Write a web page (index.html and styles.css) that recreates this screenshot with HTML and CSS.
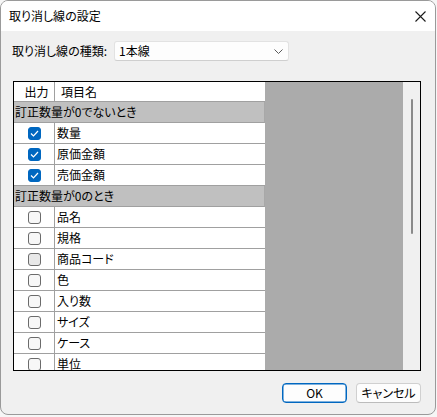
FILE: index.html
```html
<!DOCTYPE html>
<html lang="ja">
<head>
<meta charset="utf-8">
<link rel="stylesheet" href="styles.css">
</head>
<body>
<div class="window">
  <div class="titlebar">
    <span class="title">取り消し線の設定</span>
    <svg class="close" width="11" height="11" viewBox="0 0 11 11"><path d="M0.5 0.5 L10.5 10.5 M10.5 0.5 L0.5 10.5" stroke="#1a1a1a" stroke-width="1.1" fill="none"/></svg>
  </div>
  <div class="content">
    <div class="field">
      <span class="label">取り消し線の種類:</span>
      <div class="combo">
        <span>1本線</span>
        <svg class="chev" width="9" height="5" viewBox="0 0 9 5"><path d="M0.5 0.5 L4.5 4.5 L8.5 0.5" stroke="#5a5a5a" stroke-width="1" fill="none"/></svg>
      </div>
    </div>
    <div class="table">
      <div class="cells">
        <div class="row head"><div class="c1 hc1">出力</div><div class="c2 hc2">項目名</div></div>
        <div class="group">訂正数量が0でないとき</div>
        <div class="row"><div class="c1"><span class="cb on"><svg width="9" height="7" viewBox="0 0 9 7"><path d="M1 3.5 L3.5 6 L8 1" stroke="#fff" stroke-width="1.2" fill="none"/></svg></span></div><div class="c2">数量</div></div>
        <div class="row"><div class="c1"><span class="cb on"><svg width="9" height="7" viewBox="0 0 9 7"><path d="M1 3.5 L3.5 6 L8 1" stroke="#fff" stroke-width="1.2" fill="none"/></svg></span></div><div class="c2">原価金額</div></div>
        <div class="row"><div class="c1"><span class="cb on"><svg width="9" height="7" viewBox="0 0 9 7"><path d="M1 3.5 L3.5 6 L8 1" stroke="#fff" stroke-width="1.2" fill="none"/></svg></span></div><div class="c2">売価金額</div></div>
        <div class="group">訂正数量が0のとき</div>
        <div class="row"><div class="c1"><span class="cb"></span></div><div class="c2">品名</div></div>
        <div class="row"><div class="c1"><span class="cb"></span></div><div class="c2">規格</div></div>
        <div class="row"><div class="c1"><span class="cb hover"></span></div><div class="c2">商品コード</div></div>
        <div class="row"><div class="c1"><span class="cb"></span></div><div class="c2">色</div></div>
        <div class="row"><div class="c1"><span class="cb"></span></div><div class="c2">入り数</div></div>
        <div class="row"><div class="c1"><span class="cb"></span></div><div class="c2">サイズ</div></div>
        <div class="row"><div class="c1"><span class="cb"></span></div><div class="c2">ケース</div></div>
        <div class="row"><div class="c1"><span class="cb"></span></div><div class="c2">単位</div></div>
      </div>
      <div class="empty"></div>
      <div class="scroll"><div class="thumb"></div></div>
    </div>
    <div class="buttons">
      <button class="btn primary">OK</button>
      <button class="btn">キャンセル</button>
    </div>
  </div>
</div>
</body>
</html>
```
FILE: styles.css
```css
html, body {
  margin: 0;
  padding: 0;
  background: #f6f6f6;
}
body {
  font-family: "Noto Sans CJK JP", "Noto Sans", sans-serif;
  font-size: 12px;
  color: #000;
  font-feature-settings: "palt";
}
.window {
  box-sizing: border-box;
  width: 436px;
  height: 415px;
  border: 1px solid #9a9a9a;
  border-radius: 8px;
  background: #f0f0f0;
  overflow: hidden;
  display: flex;
  flex-direction: column;
}
.titlebar {
  height: 30px;
  background: #fff;
  display: flex;
  align-items: center;
  justify-content: space-between;
  padding: 0 9px 0 8px;
  flex: none;
}
.title {
  font-size: 12px;
  line-height: 14px;
}
.close {
  display: block;
  margin-top: 0;
}
.content {
  padding: 10px 14px 0 11px;
  display: flex;
  flex-direction: column;
}
.field {
  display: flex;
  align-items: center;
  height: 20px;
}
.label {
  width: 102px;
  flex: none;
  line-height: 16px;
}
.combo {
  box-sizing: border-box;
  width: 175px;
  height: 20px;
  background: #fdfdfd;
  border: 1px solid #e2e2e2;
  border-bottom-color: #cfcfcf;
  border-radius: 3px;
  display: flex;
  align-items: center;
  justify-content: space-between;
  padding: 0 5px 0 4px;
  line-height: 16px;
}
.chev {
  display: block;
}
.table {
  box-sizing: border-box;
  margin: 20px 0 0 1px;
  width: 408px;
  height: 290px;
  border: 1px solid #000;
  display: flex;
  overflow: hidden;
}
.cells {
  width: 251px;
  flex: none;
  display: flex;
  flex-direction: column;
  overflow: hidden;
  background: #fff;
}
.row {
  box-sizing: border-box;
  height: 21px;
  flex: none;
  display: flex;
  border-bottom: 1px solid #a0a0a0;
  background: #fff;
}
.row.head {
  height: 20px;
}
.c1 {
  width: 40px;
  flex: none;
  display: flex;
  align-items: center;
  justify-content: center;
}
.c2 {
  box-sizing: border-box;
  width: 211px;
  border-left: 1px solid #a0a0a0;
  padding-left: 2px;
  line-height: 20px;
  white-space: nowrap;
}
.hc1 {
  padding-left: 5px;
  box-sizing: border-box;
  line-height: 19px;
}
.hc2 {
  padding-left: 6px;
  line-height: 19px;
}
.group {
  box-sizing: border-box;
  height: 21px;
  flex: none;
  background: #c0c0c0;
  border-bottom: 1px solid #a0a0a0;
  border-right: 1px solid #a8a8a8;
  padding-left: 1px;
  line-height: 20px;
  white-space: nowrap;
}
.cb {
  box-sizing: border-box;
  width: 13px;
  height: 13px;
  border: 1px solid #6b6b6b;
  border-radius: 3px;
  background: #f7f7f7;
  display: flex;
  align-items: center;
  justify-content: center;
  margin-left: 1px;
}
.cb.hover {
  background: #e8e8e8;
}
.cb.on {
  background: #0067c0;
  border-color: #0067c0;
}
.cb svg {
  display: block;
}
.empty {
  flex: 1;
  background: #ababab;
}
.scroll {
  width: 17px;
  flex: none;
  background: #f0f0f0;
  position: relative;
}
.thumb {
  position: absolute;
  left: 8px;
  top: 17px;
  width: 2px;
  height: 135px;
  border-radius: 1px;
  background: #8a8a8a;
}
.buttons {
  display: flex;
  justify-content: flex-end;
  gap: 9px;
  margin-top: 12px;
}
.btn {
  box-sizing: border-box;
  width: 65px;
  height: 20px;
  padding: 0;
  font-family: "Noto Sans CJK JP", "Noto Sans", sans-serif;
  font-size: 12px;
  font-feature-settings: "palt";
  line-height: 16px;
  color: #000;
  background: #fdfdfd;
  border: 1px solid #d0d0d0;
  border-bottom-color: #bcbcbc;
  border-radius: 4px;
}
.btn.primary {
  border: 1px solid #0067c0;
  box-shadow: inset 0 0 0 0.5px #0067c0;
}
```
